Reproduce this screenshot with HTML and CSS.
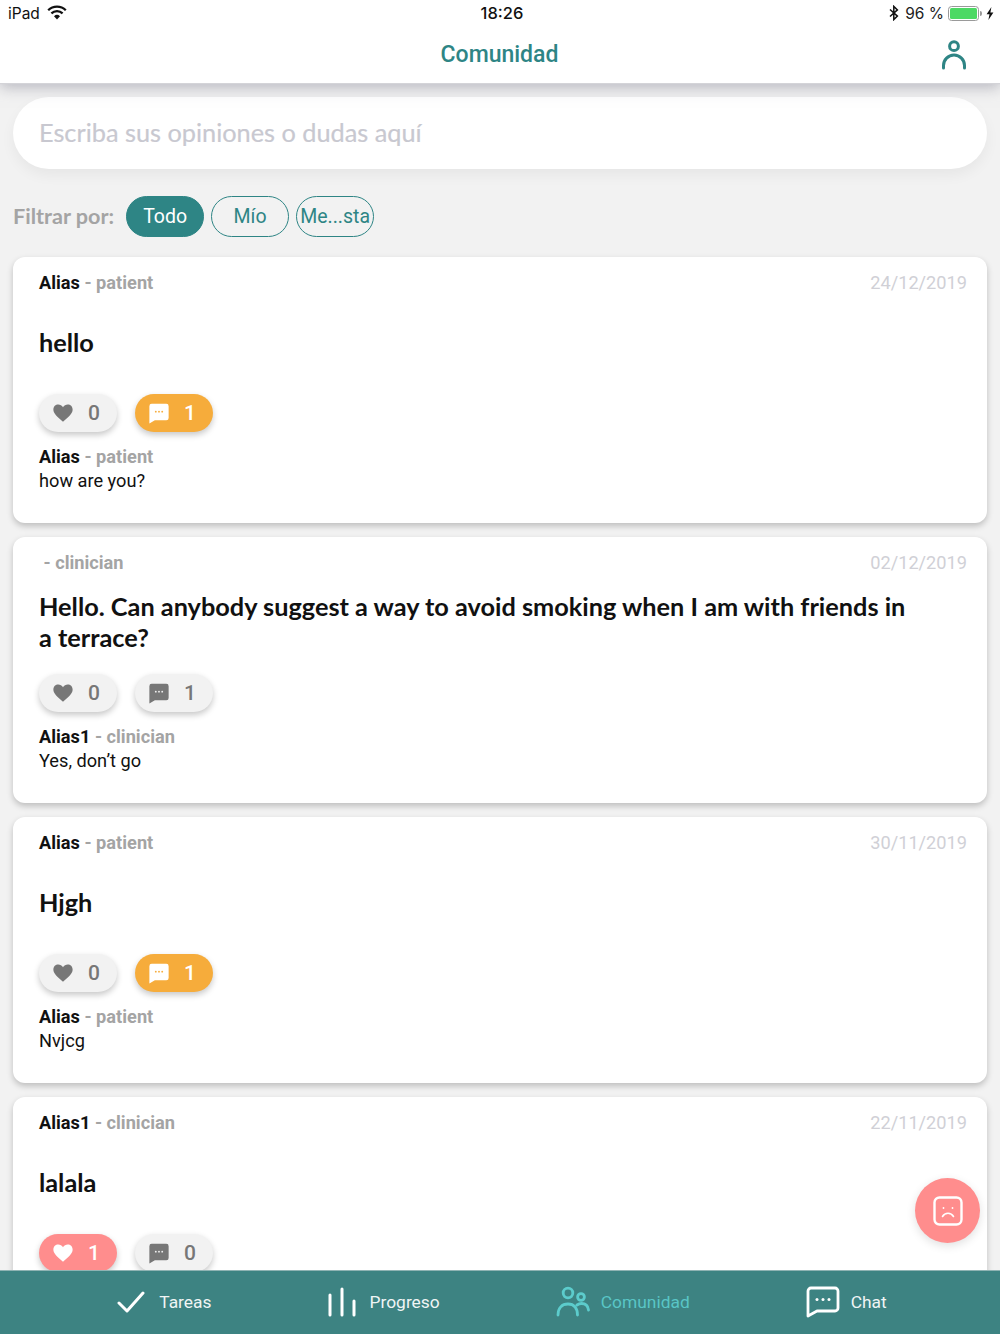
FILE: index.html
```html
<!DOCTYPE html>
<html lang="es">
<head>
<meta charset="utf-8">
<title>Comunidad</title>
<link rel="stylesheet" href="styles.css">
</head>
<body>
<div class="app">
  <header class="top">
    <div class="status">
      <div class="status-left">
        <span>iPad</span>
        <svg class="wifi" viewBox="0 0 20 15" width="20" height="15"><path d="M1.2 5.2a12.6 12.6 0 0 1 17.6 0" fill="none" stroke="#111" stroke-width="2.3"/><path d="M4.4 8.4a8.1 8.1 0 0 1 11.2 0" fill="none" stroke="#111" stroke-width="2.3"/><path d="M7 11.2a4.3 4.3 0 0 1 6 0L10 14.4z" fill="#111"/></svg>
      </div>
      <div class="clock">18:26</div>
      <div class="status-right">
        <svg class="bt" viewBox="0 0 10 16" width="10" height="16"><path d="M1 4.5l7.4 6.6L4.8 14.6V1.4l3.6 3.5L1 11.5" fill="none" stroke="#111" stroke-width="1.5"/></svg>
        <span>96 %</span>
        <span class="battery"><span class="battery-fill"></span></span>
        <span class="battery-tip"></span>
        <svg class="bolt" viewBox="0 0 8 13" width="8" height="13"><path d="M5.4 0L0.6 7.2h2.9L2.4 13l5-7.6H4.4z" fill="#111"/></svg>
      </div>
    </div>
    <div class="title-bar">
      <h1>Comunidad</h1>
      <svg class="user-icon" viewBox="0 0 26 32" width="26" height="32"><circle cx="13" cy="7.2" r="4.4" fill="none" stroke="#2e8585" stroke-width="3"/><path d="M2.5 29v-2.5a10.5 10.5 0 0 1 21 0V29" fill="none" stroke="#2e8585" stroke-width="3" stroke-linecap="round"/></svg>
    </div>
  </header>

  <main class="content">
    <div class="search">Escriba sus opiniones o dudas aquí</div>
    <div class="filters">
      <span class="filter-label">Filtrar por:</span>
      <span class="chip chip-on">Todo</span>
      <span class="chip">Mío</span>
      <span class="chip">Me...sta</span>
    </div>

    <article class="card">
      <div class="meta"><span><b>Alias</b> <i>- patient</i></span><time>24/12/2019</time></div>
      <h2>hello</h2>
      <div class="actions">
        <span class="pill"><svg class="ic" viewBox="0 0 24 24"><use href="#heart"/></svg>0</span>
        <span class="pill pill-orange"><svg class="ic" viewBox="0 0 24 24"><use href="#bubble"/></svg>1</span>
      </div>
      <div class="reply"><b>Alias</b> <i>- patient</i><p>how are you?</p></div>
    </article>

    <article class="card">
      <div class="meta"><span>&nbsp;<i>- clinician</i></span><time>02/12/2019</time></div>
      <h2>Hello. Can anybody suggest a way to avoid smoking when I am with friends in a terrace?</h2>
      <div class="actions">
        <span class="pill"><svg class="ic" viewBox="0 0 24 24"><use href="#heart"/></svg>0</span>
        <span class="pill"><svg class="ic" viewBox="0 0 24 24"><use href="#bubble"/></svg>1</span>
      </div>
      <div class="reply"><b>Alias1</b> <i>- clinician</i><p>Yes, don’t go</p></div>
    </article>

    <article class="card">
      <div class="meta"><span><b>Alias</b> <i>- patient</i></span><time>30/11/2019</time></div>
      <h2>Hjgh</h2>
      <div class="actions">
        <span class="pill"><svg class="ic" viewBox="0 0 24 24"><use href="#heart"/></svg>0</span>
        <span class="pill pill-orange"><svg class="ic" viewBox="0 0 24 24"><use href="#bubble"/></svg>1</span>
      </div>
      <div class="reply"><b>Alias</b> <i>- patient</i><p>Nvjcg</p></div>
    </article>

    <article class="card">
      <div class="meta"><span><b>Alias1</b> <i>- clinician</i></span><time>22/11/2019</time></div>
      <h2>lalala</h2>
      <div class="actions">
        <span class="pill pill-red"><svg class="ic" viewBox="0 0 24 24"><use href="#heart"/></svg>1</span>
        <span class="pill"><svg class="ic" viewBox="0 0 24 24"><use href="#bubble"/></svg>0</span>
      </div>
    </article>
  </main>

  <button class="fab" type="button" aria-label="Triste">
    <svg viewBox="0 0 30 30" width="30" height="30"><rect x="1.500" y="1.500" width="27" height="27" rx="5" fill="none" stroke="#fff" stroke-width="2.400"/><circle cx="10.500" cy="12" r="0.900" fill="#fff"/><circle cx="19.500" cy="12" r="0.900" fill="#fff"/><path d="M9.500 20.500c1.400-2.400 3.300-3.200 5.500-3.200s4.100.8 5.500 3.200" fill="none" stroke="#fff" stroke-width="1.600" stroke-linecap="round"/></svg>
  </button>

  <nav class="tabs">
    <div class="tab">
      <svg viewBox="0 0 28 22" width="28" height="22"><path d="M2 12l8 8L26 2" fill="none" stroke="#fff" stroke-width="3" stroke-linecap="round" stroke-linejoin="round"/></svg>
      <span>Tareas</span>
    </div>
    <div class="tab">
      <svg viewBox="0 0 28 30" width="28" height="30"><path d="M2 8v20M14 2v26M26 14v14" fill="none" stroke="#fff" stroke-width="3" stroke-linecap="round"/></svg>
      <span>Progreso</span>
    </div>
    <div class="tab tab-on">
      <svg viewBox="0 0 34 31" width="34" height="31"><circle cx="12" cy="7" r="4.800" fill="none" stroke="#5ccccc" stroke-width="2.800"/><circle cx="25" cy="11" r="3.400" fill="none" stroke="#5ccccc" stroke-width="2.800"/><path d="M2 29c0-7 4-11 10-11s9.500 4 9.500 11M21 19c1.500-1 3-1.500 4.500-1.500 4 0 6.500 2.500 7 6.500" fill="none" stroke="#5ccccc" stroke-width="2.800" stroke-linecap="round"/></svg>
      <span>Comunidad</span>
    </div>
    <div class="tab tab-chat">
      <svg viewBox="0 0 34 32" width="34" height="32"><path d="M5 2h24a3 3 0 0 1 3 3v17a3 3 0 0 1-3 3H11l-9 5V5a3 3 0 0 1 3-3z" fill="none" stroke="#fff" stroke-width="2.800" stroke-linejoin="round"/><circle cx="11" cy="13.500" r="1.500" fill="#fff"/><circle cx="17" cy="13.500" r="1.500" fill="#fff"/><circle cx="23" cy="13.500" r="1.500" fill="#fff"/></svg>
      <span>Chat</span>
    </div>
  </nav>
</div>

<svg class="defs" width="0" height="0">
  <defs>
    <path id="heart" d="M12 21.500C5 15.600 1.500 12.300 1.500 8.200 1.500 5 4 2.800 6.800 2.800c2.100 0 4 1.100 5.200 3 1.200-1.900 3.100-3 5.200-3 2.800 0 5.300 2.200 5.300 5.400 0 4.100-3.500 7.400-10.500 13.300z" fill="currentColor"/>
    <g id="bubble">
      <path d="M4 2h16a2.500 2.500 0 0 1 2.500 2.500v13a2.500 2.500 0 0 1-2.500 2.500H7.500l-6 3.500V4.500A2.500 2.500 0 0 1 4 2z" fill="currentColor"/>
      <circle cx="8.500" cy="10.500" r="1" class="dot"/><circle cx="12" cy="10.500" r="1" class="dot"/><circle cx="15.500" cy="10.500" r="1" class="dot"/>
    </g>
  </defs>
</svg>
</body>
</html>
```
FILE: styles.css
```css
* { box-sizing: border-box; }
html, body { margin: 0; padding: 0; height: 100%; overflow: hidden; }
body { font-family: Roboto, "Liberation Sans", sans-serif; background: #f2f2f2; color: #111; }
.defs { position: absolute; }
.app { position: relative; height: 1334px; display: flex; flex-direction: column; overflow: hidden; }

.top { position: relative; z-index: 2; flex: none; height: 83px; background: #fff; box-shadow: 0 1px 1px #d4d4d8, 0 4px 14px rgba(120,120,135,.5); }
.status { height: 26px; display: grid; grid-template-columns: 1fr auto 1fr; align-items: center; padding: 0 6px 0 8px; font-size: 15.500px; font-family: Inter, Roboto, sans-serif; }
.status-left { display: flex; align-items: center; gap: 7px; }
.wifi { margin-top: -2px; }
.clock { font-weight: 500; font-size: 16.500px; margin-left: 2px; }
.status-right { display: flex; align-items: center; justify-content: flex-end; color: #222; }
.bt { margin-right: 6px; }
.battery { width: 31px; height: 15px; border: 1px solid #9a9a9a; border-radius: 3.500px; padding: 1px; margin-left: 4px; display: flex; }
.battery-fill { flex: 1; background: #4cd964; border-radius: 1.500px; }
.battery-tip { width: 2px; height: 5px; background: #9a9a9a; margin-left: 1px; border-radius: 0 2px 2px 0; }
.bolt { margin-left: 4px; }
.title-bar { position: relative; height: 57px; display: flex; align-items: center; justify-content: center; }
.title-bar h1 { margin: 0 0 0 -1px; font-size: 23px; font-weight: 500; color: #2e8585; }
.user-icon { position: absolute; right: 33px; top: 13px; }

.content { flex: none; height: 1187px; padding: 14px 13px 0; overflow: hidden; }
.search { height: 72px; border-radius: 36px; background: #fff; display: flex; align-items: center; padding: 0 0 2px 26px; font-family: Lato, sans-serif; font-size: 25.300px; color: #c8c8d0; -webkit-text-stroke: .2px #c8c8d0; box-shadow: 0 6px 14px rgba(0,0,0,.05); }
.filters { display: flex; align-items: center; gap: 7px; height: 41px; margin-top: 27px; }
.filter-label { font-family: Lato, sans-serif; font-weight: 700; font-size: 21.600px; color: #a4a4a4; margin: -2px 5px 0 0; }
.chip { width: 78px; height: 41px; border: 1.500px solid #2e8585; border-radius: 21px; display: flex; align-items: center; justify-content: center; color: #2e8585; font-size: 19.500px; white-space: nowrap; }
.chip-on { background: #2e8585; color: #fff; }

.card { height: 266px; background: #fff; border-radius: 12px; margin-top: 14px; padding: 13px 20px 0 26px; box-shadow: 0 3px 6px rgba(0,0,0,.22); }
.filters + .card { margin-top: 20px; }
.meta { display: flex; justify-content: space-between; font-size: 18.200px; line-height: 26px; }
b { font-weight: 700; color: #111; }
i { font-style: normal; font-weight: 700; color: #a4a4a4; }
time { color: #d0d0d6; font-weight: 400; }
.card h2 { margin: 15px 54px 0 0; height: 62px; display: flex; align-items: center; font-family: Lato, sans-serif; font-weight: 700; font-size: 25.300px; line-height: 31px; color: #111; }
.actions { display: flex; gap: 18px; margin-top: 21px; }
.pill { --dot: #f2f2f2; width: 78px; height: 38px; border-radius: 19px; background: #f2f2f2; color: #777; display: flex; align-items: center; gap: 14px; padding-left: 13px; font-size: 21px; font-weight: 500; box-shadow: 0 3px 6px rgba(0,0,0,.22); }
.ic { width: 22px; height: 22px; color: #777; flex: none; }
.dot { fill: var(--dot); }
.pill-orange { --dot: #f6ac3b; background: #f6ac3b; color: #fff; }
.pill-orange .ic { color: #fff; }
.pill-red { --dot: #ff8d8d; background: #ff8d8d; color: #fff; }
.pill-red .ic { color: #fff; }
.reply { margin-top: 13px; font-size: 18.200px; line-height: 24px; }
.reply p { margin: 0; }

.fab { position: absolute; left: 915px; top: 1178px; z-index: 3; width: 65px; height: 65px; padding: 0; border: 0; border-radius: 50%; background: #ff8d8d; display: flex; align-items: center; justify-content: center; box-shadow: 0 3px 10px rgba(0,0,0,.12); }

.tabs { position: absolute; left: 0; right: 0; top: 1270px; z-index: 2; height: 64px; background: #3d8382; border-top: 1px solid #8fb3b3; display: flex; justify-content: center; gap: 116px; padding: 0 0 2px 4px; color: #fff; font-size: 17.400px; }
.tab { display: flex; align-items: center; gap: 14px; }
.tab span { opacity: .92; }
.tab-on { color: #5ccccc; gap: 11px; }
.tab-chat { gap: 11px; }
```
